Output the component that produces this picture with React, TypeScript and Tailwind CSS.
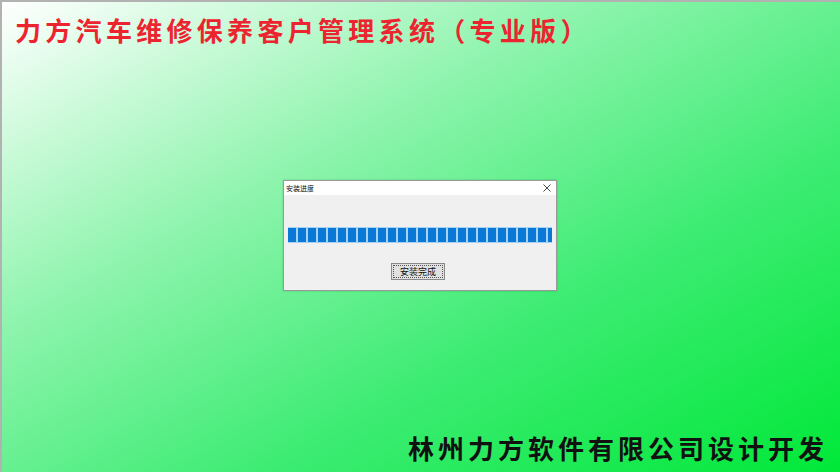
import React from "react";

export default function App() {
  const blocks = Array.from({ length: 27 });
  return (
    <div
      className="w-[840px] h-[472px] relative overflow-hidden flex flex-col border-t-2 border-l-2 border-[rgba(0,0,0,0.3)]"
      style={{ fontFamily: '"Noto Sans CJK SC", "Noto Sans", sans-serif' }}
    >
      <div className="absolute inset-0 -z-10 bg-[linear-gradient(to_bottom_right,#ffffff_0%,#8ef4ad_35%,#3eec74_65%,#00e838_100%)]" />
      <div className="pl-[13px] pt-[12px] h-[48px] text-[26px] leading-[32px] font-bold tracking-[4.3px] text-[#ec2430] whitespace-nowrap">
        力方汽车维修保养客户管理系统（专业版）
      </div>
      <div className="flex-1 flex justify-center pt-[130px] pr-[2px]">
        <div className="w-[274px] h-[111px] border border-[#9a9a9a] bg-[#f0f0f0] flex flex-col shadow-[0_0_2px_rgba(0,0,0,0.2)]">
          <div className="h-[14px] bg-white flex items-center justify-between pl-[2px] pr-[5px]">
            <span className="text-[7px] leading-[10px] text-[#111]">安装进度</span>
            <svg width="8" height="8" viewBox="0 0 8 8">
              <path d="M0.5 0.5 L7.5 7.5 M7.5 0.5 L0.5 7.5" stroke="#333" strokeWidth="0.9" />
            </svg>
          </div>
          <div className="flex flex-col items-center pt-[32px] px-[4px]">
            <div className="w-[264px] h-[16px] bg-[#a8d2f3] flex gap-[2px] overflow-hidden py-[1px]">
              {blocks.map((_, i) => (
                <div key={i} className="w-[8px] shrink-0 h-full bg-[#0a78d7]" />
              ))}
            </div>
            <div className="mt-[20px] mr-[4px] w-[54px] h-[17px] border border-[#8a8a8a] bg-[#e1e1e1] flex items-center justify-center outline-1 outline-dotted outline-[#555] -outline-offset-3">
              <span className="text-[9px] leading-[12px] text-[#111]">安装完成</span>
            </div>
          </div>
        </div>
      </div>
      <div className="flex justify-end pr-[12px] pb-[8px]">
        <div className="text-[26px] leading-[32px] font-bold tracking-[4px] text-[#111] whitespace-nowrap">
          林州力方软件有限公司设计开发
        </div>
      </div>
    </div>
  );
}
